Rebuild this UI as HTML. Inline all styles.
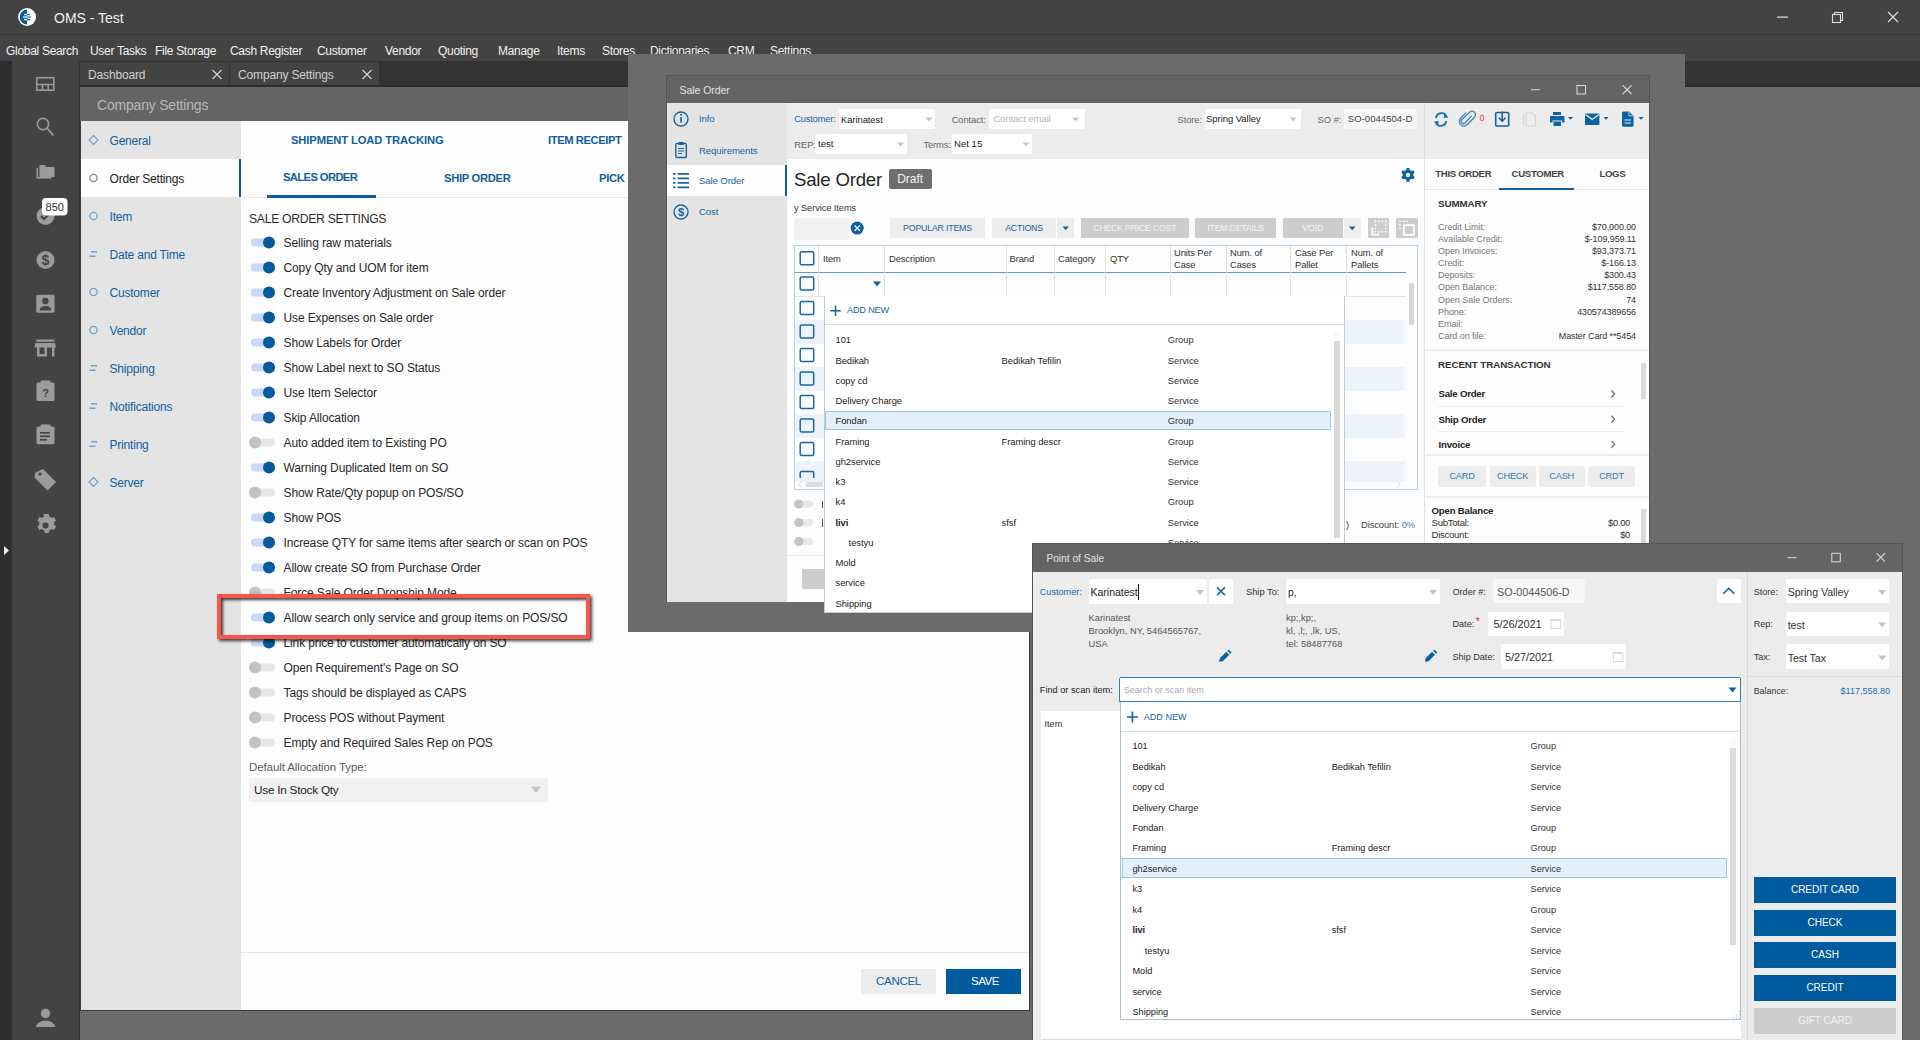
<!DOCTYPE html>
<html><head><meta charset="utf-8">
<style>
*{box-sizing:border-box;margin:0;padding:0}
html,body{width:1920px;height:1040px;overflow:hidden;background:#6b6b6b;font-family:"Liberation Sans",sans-serif;}
.a{position:absolute}
.t{position:absolute;white-space:nowrap;line-height:1}
.bl{color:#0b5f9e}
svg{position:absolute;overflow:visible}
</style></head><body>
<!-- title bar -->
<div class="a" style="left:0;top:0;width:1920px;height:34px;background:#434343"></div>
<div class="a" style="left:0;top:34px;width:1920px;height:1px;background:#353535"></div>
<div class="a" style="left:0;top:35px;width:1920px;height:26px;background:#434343"></div>
<!-- tab strip -->
<div class="a" style="left:80px;top:61px;width:1840px;height:26px;background:#333333"></div>
<!-- left strip + sidebar -->
<div class="a" style="left:0;top:61px;width:12px;height:979px;background:#2e2e2e"></div>
<div class="a" style="left:12px;top:61px;width:67px;height:979px;background:#434343"></div>
<div class="a" style="left:79px;top:61px;width:1px;height:979px;background:#333"></div>


<svg style="left:0;top:0" width="60" height="34">
<circle cx="27.1" cy="17" r="9" fill="#fff"/>
<path d="M27.1 9.6 A7.4 7.4 0 0 0 27.1 24.4 Z" fill="#075e9c"/>
<rect x="24" y="13.9" width="3.1" height="1.3" fill="#fff"/>
<rect x="27.1" y="13.9" width="3" height="1.3" fill="#075e9c"/>
<rect x="23" y="16.3" width="4.1" height="1.5" fill="#d7e4ee"/>
<rect x="27.1" y="16.3" width="4" height="1.5" fill="#4d88b3"/>
<rect x="24" y="18.9" width="3.1" height="1.3" fill="#fff"/>
<rect x="27.1" y="18.9" width="3" height="1.3" fill="#075e9c"/>
</svg>
<div class="t" style="left:54px;top:11.3px;font-size:14px;color:#f0f0f0">OMS - Test</div>
<svg style="left:1770px;top:5px" width="140" height="24">
<rect x="7" y="11.5" width="11" height="1.2" fill="#ddd"/>
<rect x="62.5" y="9.5" width="8" height="8" fill="none" stroke="#ddd" stroke-width="1.1"/>
<path d="M64.5 9.5 V7.5 H72.5 V15.5 H70.5" fill="none" stroke="#ddd" stroke-width="1.1"/>
<path d="M118 7 L128 17 M128 7 L118 17" stroke="#ddd" stroke-width="1.2"/>
</svg>

<div class="t" style="left:6px;top:45.2px;font-size:12px;letter-spacing:-0.3px;color:#f2f2f2">Global Search</div>
<div class="t" style="left:90px;top:45.2px;font-size:12px;letter-spacing:-0.3px;color:#f2f2f2">User Tasks</div>
<div class="t" style="left:155px;top:45.2px;font-size:12px;letter-spacing:-0.3px;color:#f2f2f2">File Storage</div>
<div class="t" style="left:230px;top:45.2px;font-size:12px;letter-spacing:-0.3px;color:#f2f2f2">Cash Register</div>
<div class="t" style="left:317px;top:45.2px;font-size:12px;letter-spacing:-0.3px;color:#f2f2f2">Customer</div>
<div class="t" style="left:385px;top:45.2px;font-size:12px;letter-spacing:-0.3px;color:#f2f2f2">Vendor</div>
<div class="t" style="left:438px;top:45.2px;font-size:12px;letter-spacing:-0.3px;color:#f2f2f2">Quoting</div>
<div class="t" style="left:498px;top:45.2px;font-size:12px;letter-spacing:-0.3px;color:#f2f2f2">Manage</div>
<div class="t" style="left:557px;top:45.2px;font-size:12px;letter-spacing:-0.3px;color:#f2f2f2">Items</div>
<div class="t" style="left:602px;top:45.2px;font-size:12px;letter-spacing:-0.3px;color:#f2f2f2">Stores</div>
<div class="t" style="left:650px;top:45.2px;font-size:12px;letter-spacing:-0.3px;color:#f2f2f2">Dictionaries</div>
<div class="t" style="left:728px;top:45.2px;font-size:12px;letter-spacing:-0.3px;color:#f2f2f2">CRM</div>
<div class="t" style="left:770px;top:45.2px;font-size:12px;letter-spacing:-0.3px;color:#f2f2f2">Settings</div>


<svg style="left:12px;top:61px" width="67" height="979">
<g fill="none" stroke="#9b9b9b" stroke-width="1.6">
<rect x="24.8" y="16.7" width="17" height="12.5"/>
<path d="M24.8 23.5 H41.8 M30.5 23.5 V29.2 M36.2 23.5 V29.2"/>
<circle cx="31" cy="63" r="5.6"/>
<path d="M35 67 L41.5 74.5" stroke-width="1.9"/>
</g>
<g fill="#9b9b9b">
<path d="M27.5 104 h5 l1.8 2 h8.2 v10 h-15 z"/>
<path d="M24.5 107 v10.5 h15 v-1.6 h-13.4 v-8.9 z"/>
<circle cx="33.5" cy="155" r="9"/>
<circle cx="33.5" cy="199" r="9"/>
<rect x="24.3" y="233.8" width="18.2" height="17.9" rx="1.5"/>
<path d="M24.3 278.5 h18 v2.2 h-18z M23.5 282 h19.5 l1 4.5 h-21.5z M25 286.5 h2.5 v9 h-2.5z M40 286.5 h2.5 v9 h-2.5z M25 293 h10 v2.5 h-10z M32.5 286.5 h2.5 v9 h-2.5z"/>
<rect x="24.5" y="321.5" width="18" height="18.5" rx="1.5"/>
<rect x="28.5" y="319.5" width="10" height="4" rx="1"/>
<rect x="24.5" y="365.5" width="18" height="17.8" rx="1.5"/>
<rect x="28.5" y="363.5" width="10" height="4" rx="1"/>
<path d="M23 412 l8 -4 l13 13 l-8.5 8.5 l-13 -13 z"/>
<path d="M33.5 453 m-2,0 l0.6,2.6 a7,7 0 0 0 -2.2,1.3 l-2.5,-0.9 l-2,3.4 l2,1.8 a7,7 0 0 0 0,2.6 l-2,1.8 l2,3.4 l2.5,-0.9 a7,7 0 0 0 2.2,1.3 l0.6,2.6 h4 l0.6,-2.6 a7,7 0 0 0 2.2,-1.3 l2.5,0.9 l2,-3.4 l-2,-1.8 a7,7 0 0 0 0,-2.6 l2,-1.8 l-2,-3.4 l-2.5,0.9 a7,7 0 0 0 -2.2,-1.3 l-0.6,-2.6 z"/>
<circle cx="33.5" cy="952.5" r="4.7"/>
<path d="M24 966 a9.5 6.5 0 0 1 19 0 z"/>
</g>
<g fill="none" stroke="#434343" stroke-width="2">
<path d="M29 155 l3 3 l5.5 -5.5"/>
</g>
<text x="33.5" y="204" font-family="Liberation Sans" font-size="14" font-weight="bold" fill="#434343" text-anchor="middle">$</text>
<g fill="#434343">
<circle cx="33.4" cy="240" r="3.2"/>
<path d="M27.5 249.5 a6 4.5 0 0 1 12 0 z"/>
<rect x="28" y="371" width="10" height="1.6"/><rect x="28" y="374.5" width="10" height="1.6"/><rect x="28" y="378" width="7" height="1.6"/>
<circle cx="28" cy="413" r="1.6"/>
<circle cx="33.5" cy="464.5" r="3"/>
</g>
<text x="33.5" y="336" font-family="Liberation Sans" font-size="11" font-weight="bold" fill="#434343" text-anchor="middle">?</text>
<rect x="30" y="137" width="25.5" height="17.5" rx="4" fill="#fff"/>
<text x="42.8" y="150" font-family="Liberation Sans" font-size="11" fill="#333" text-anchor="middle">850</text>
<path d="M-8 485 l5 4.5 l-5 4.5z" fill="#eee"/>
</svg>


<div class="a" style="left:80px;top:62px;width:149px;height:23px;background:#434343"></div>
<div class="a" style="left:230px;top:62px;width:149px;height:23px;background:#434343"></div>
<div class="a" style="left:80px;top:85px;width:1840px;height:2px;background:#2c2c2c"></div>
<div class="t" style="left:88px;top:68.7px;font-size:12px;color:#cfcfcf;font-weight:400;letter-spacing:-0.15px;">Dashboard</div>
<div class="t" style="left:238px;top:68.7px;font-size:12px;color:#cfcfcf;font-weight:400;letter-spacing:-0.15px;">Company Settings</div>
<svg style="left:0;top:0" width="400" height="100"><path d="M212.5 70 L221.5 79 M221.5 70 L212.5 79 M362.5 70 L371.5 79 M371.5 70 L362.5 79" stroke="#d0d0d0" stroke-width="1.2"/></svg>


<div class="a" style="left:80px;top:87px;width:950px;height:34px;background:#646464"></div>
<div class="a" style="left:80px;top:121px;width:950px;height:890px;background:#3d3d3d"></div>
<div class="a" style="left:81px;top:121px;width:160px;height:889px;background:#e4e4e4"></div>
<div class="a" style="left:241px;top:121px;width:788px;height:889px;background:#fdfdfd"></div>
<div class="a" style="left:81px;top:159px;width:160px;height:38px;background:#fdfdfd"></div>
<div class="a" style="left:239px;top:159px;width:2px;height:38px;background:#0e5e9e"></div>
<div class="t" style="left:97px;top:98.3px;font-size:14px;color:#b9b9b9;font-weight:400;letter-spacing:-0.2px;">Company Settings</div>
<div class="t" style="left:109.5px;top:135.2px;font-size:12px;color:#0e60a0;font-weight:400;letter-spacing:-0.2px;">General</div>
<div class="t" style="left:109.5px;top:173.2px;font-size:12px;color:#1a1a1a;font-weight:400;letter-spacing:-0.2px;">Order Settings</div>
<div class="t" style="left:109.5px;top:211.2px;font-size:12px;color:#0e60a0;font-weight:400;letter-spacing:-0.2px;">Item</div>
<div class="t" style="left:109.5px;top:249.2px;font-size:12px;color:#0e60a0;font-weight:400;letter-spacing:-0.2px;">Date and Time</div>
<div class="t" style="left:109.5px;top:287.2px;font-size:12px;color:#0e60a0;font-weight:400;letter-spacing:-0.2px;">Customer</div>
<div class="t" style="left:109.5px;top:325.2px;font-size:12px;color:#0e60a0;font-weight:400;letter-spacing:-0.2px;">Vendor</div>
<div class="t" style="left:109.5px;top:363.2px;font-size:12px;color:#0e60a0;font-weight:400;letter-spacing:-0.2px;">Shipping</div>
<div class="t" style="left:109.5px;top:401.2px;font-size:12px;color:#0e60a0;font-weight:400;letter-spacing:-0.2px;">Notifications</div>
<div class="t" style="left:109.5px;top:439.2px;font-size:12px;color:#0e60a0;font-weight:400;letter-spacing:-0.2px;">Printing</div>
<div class="t" style="left:109.5px;top:477.2px;font-size:12px;color:#0e60a0;font-weight:400;letter-spacing:-0.2px;">Server</div>
<svg style="left:0;top:0" width="260" height="500"><path d="M93.5 135.5 L98 140 L93.5 144.5 L89 140 Z" fill="none" stroke="#6aa3c8" stroke-width="1.2"/><circle cx="93.5" cy="178.0" r="3.6" fill="none" stroke="#8a8a8a" stroke-width="1.3"/><circle cx="93.5" cy="216.0" r="3.6" fill="none" stroke="#6aa3c8" stroke-width="1.3"/><path d="M91 251.8 H97 M89.5 256.3 H95.5" stroke="#6aa3c8" stroke-width="1.5"/><circle cx="93.5" cy="292.0" r="3.6" fill="none" stroke="#6aa3c8" stroke-width="1.3"/><circle cx="93.5" cy="330.0" r="3.6" fill="none" stroke="#6aa3c8" stroke-width="1.3"/><path d="M91 365.8 H97 M89.5 370.3 H95.5" stroke="#6aa3c8" stroke-width="1.5"/><path d="M91 403.8 H97 M89.5 408.3 H95.5" stroke="#6aa3c8" stroke-width="1.5"/><path d="M91 441.8 H97 M89.5 446.3 H95.5" stroke="#6aa3c8" stroke-width="1.5"/><path d="M93.5 477.5 L98 482 L93.5 486.5 L89 482 Z" fill="none" stroke="#6aa3c8" stroke-width="1.2"/></svg>
<div class="t" style="left:291px;top:135.1px;font-size:11.2px;color:#0e60a0;font-weight:700;letter-spacing:-0.1px;">SHIPMENT LOAD TRACKING</div>
<div class="t" style="left:548px;top:135.1px;font-size:11.2px;color:#0e60a0;font-weight:700;letter-spacing:-0.4px;">ITEM RECEIPT</div>
<div class="t" style="left:283px;top:172.1px;font-size:11.2px;color:#0e60a0;font-weight:700;letter-spacing:-0.6px;">SALES ORDER</div>
<div class="t" style="left:444px;top:173.1px;font-size:11.2px;color:#0e60a0;font-weight:700;letter-spacing:-0.3px;">SHIP ORDER</div>
<div class="t" style="left:599px;top:173.1px;font-size:11.2px;color:#0e60a0;font-weight:700;letter-spacing:-0.3px;">PICK</div>
<div class="a" style="left:241px;top:197px;width:788px;height:1px;background:#e9e9e9"></div>
<div class="a" style="left:267px;top:194.5px;width:109px;height:3px;background:#0e5e9e"></div>
<div class="t" style="left:249px;top:212.9px;font-size:12.2px;color:#2e2e2e;font-weight:400;letter-spacing:-0.3px;">SALE ORDER SETTINGS</div>
<div class="t" style="left:283.5px;top:236.7px;font-size:12px;color:#292929;font-weight:400;letter-spacing:-0.12px;">Selling raw materials</div>
<div class="t" style="left:283.5px;top:261.7px;font-size:12px;color:#292929;font-weight:400;letter-spacing:-0.12px;">Copy Qty and UOM for item</div>
<div class="t" style="left:283.5px;top:286.7px;font-size:12px;color:#292929;font-weight:400;letter-spacing:-0.12px;">Create Inventory Adjustment on Sale order</div>
<div class="t" style="left:283.5px;top:311.7px;font-size:12px;color:#292929;font-weight:400;letter-spacing:-0.12px;">Use Expenses on Sale order</div>
<div class="t" style="left:283.5px;top:336.7px;font-size:12px;color:#292929;font-weight:400;letter-spacing:-0.12px;">Show Labels for Order</div>
<div class="t" style="left:283.5px;top:361.7px;font-size:12px;color:#292929;font-weight:400;letter-spacing:-0.12px;">Show Label next to SO Status</div>
<div class="t" style="left:283.5px;top:386.7px;font-size:12px;color:#292929;font-weight:400;letter-spacing:-0.12px;">Use Item Selector</div>
<div class="t" style="left:283.5px;top:411.7px;font-size:12px;color:#292929;font-weight:400;letter-spacing:-0.12px;">Skip Allocation</div>
<div class="t" style="left:283.5px;top:436.7px;font-size:12px;color:#292929;font-weight:400;letter-spacing:-0.12px;">Auto added item to Existing PO</div>
<div class="t" style="left:283.5px;top:461.7px;font-size:12px;color:#292929;font-weight:400;letter-spacing:-0.12px;">Warning Duplicated Item on SO</div>
<div class="t" style="left:283.5px;top:486.7px;font-size:12px;color:#292929;font-weight:400;letter-spacing:-0.12px;">Show Rate/Qty popup on POS/SO</div>
<div class="t" style="left:283.5px;top:511.7px;font-size:12px;color:#292929;font-weight:400;letter-spacing:-0.12px;">Show POS</div>
<div class="t" style="left:283.5px;top:536.7px;font-size:12px;color:#292929;font-weight:400;letter-spacing:-0.12px;">Increase QTY for same items after search or scan on POS</div>
<div class="t" style="left:283.5px;top:561.7px;font-size:12px;color:#292929;font-weight:400;letter-spacing:-0.12px;">Allow create SO from Purchase Order</div>
<div class="t" style="left:283.5px;top:586.7px;font-size:12px;color:#292929;font-weight:400;letter-spacing:-0.12px;">Force Sale Order Dropship Mode</div>
<div class="t" style="left:283.5px;top:611.7px;font-size:12px;color:#292929;font-weight:400;letter-spacing:-0.12px;">Allow search only service and group items on POS/SO</div>
<div class="t" style="left:283.5px;top:636.7px;font-size:12px;color:#292929;font-weight:400;letter-spacing:-0.12px;">Link price to customer automatically on SO</div>
<div class="t" style="left:283.5px;top:661.7px;font-size:12px;color:#292929;font-weight:400;letter-spacing:-0.12px;">Open Requirement's Page on SO</div>
<div class="t" style="left:283.5px;top:686.7px;font-size:12px;color:#292929;font-weight:400;letter-spacing:-0.12px;">Tags should be displayed as CAPS</div>
<div class="t" style="left:283.5px;top:711.7px;font-size:12px;color:#292929;font-weight:400;letter-spacing:-0.12px;">Process POS without Payment</div>
<div class="t" style="left:283.5px;top:736.7px;font-size:12px;color:#292929;font-weight:400;letter-spacing:-0.12px;">Empty and Required Sales Rep on POS</div>
<svg style="left:0;top:0" width="600" height="800"><rect x="251" y="238.5" width="24" height="8" rx="4" fill="#c9d8fa"/><circle cx="269" cy="242.5" r="6" fill="#035c9c"/><rect x="251" y="263.5" width="24" height="8" rx="4" fill="#c9d8fa"/><circle cx="269" cy="267.5" r="6" fill="#035c9c"/><rect x="251" y="288.5" width="24" height="8" rx="4" fill="#c9d8fa"/><circle cx="269" cy="292.5" r="6" fill="#035c9c"/><rect x="251" y="313.5" width="24" height="8" rx="4" fill="#c9d8fa"/><circle cx="269" cy="317.5" r="6" fill="#035c9c"/><rect x="251" y="338.5" width="24" height="8" rx="4" fill="#c9d8fa"/><circle cx="269" cy="342.5" r="6" fill="#035c9c"/><rect x="251" y="363.5" width="24" height="8" rx="4" fill="#c9d8fa"/><circle cx="269" cy="367.5" r="6" fill="#035c9c"/><rect x="251" y="388.5" width="24" height="8" rx="4" fill="#c9d8fa"/><circle cx="269" cy="392.5" r="6" fill="#035c9c"/><rect x="251" y="413.5" width="24" height="8" rx="4" fill="#c9d8fa"/><circle cx="269" cy="417.5" r="6" fill="#035c9c"/><rect x="251" y="438.5" width="24" height="8" rx="4" fill="#e6e6e6"/><circle cx="255" cy="442.5" r="6" fill="#c2c2c2"/><rect x="251" y="463.5" width="24" height="8" rx="4" fill="#c9d8fa"/><circle cx="269" cy="467.5" r="6" fill="#035c9c"/><rect x="251" y="488.5" width="24" height="8" rx="4" fill="#e6e6e6"/><circle cx="255" cy="492.5" r="6" fill="#c2c2c2"/><rect x="251" y="513.5" width="24" height="8" rx="4" fill="#c9d8fa"/><circle cx="269" cy="517.5" r="6" fill="#035c9c"/><rect x="251" y="538.5" width="24" height="8" rx="4" fill="#c9d8fa"/><circle cx="269" cy="542.5" r="6" fill="#035c9c"/><rect x="251" y="563.5" width="24" height="8" rx="4" fill="#c9d8fa"/><circle cx="269" cy="567.5" r="6" fill="#035c9c"/><rect x="251" y="588.5" width="24" height="8" rx="4" fill="#e6e6e6"/><circle cx="255" cy="592.5" r="6" fill="#c2c2c2"/><rect x="251" y="613.5" width="24" height="8" rx="4" fill="#c9d8fa"/><circle cx="269" cy="617.5" r="6" fill="#035c9c"/><rect x="251" y="638.5" width="24" height="8" rx="4" fill="#c9d8fa"/><circle cx="269" cy="642.5" r="6" fill="#035c9c"/><rect x="251" y="663.5" width="24" height="8" rx="4" fill="#e6e6e6"/><circle cx="255" cy="667.5" r="6" fill="#c2c2c2"/><rect x="251" y="688.5" width="24" height="8" rx="4" fill="#e6e6e6"/><circle cx="255" cy="692.5" r="6" fill="#c2c2c2"/><rect x="251" y="713.5" width="24" height="8" rx="4" fill="#e6e6e6"/><circle cx="255" cy="717.5" r="6" fill="#c2c2c2"/><rect x="251" y="738.5" width="24" height="8" rx="4" fill="#e6e6e6"/><circle cx="255" cy="742.5" r="6" fill="#c2c2c2"/></svg>
<div class="t" style="left:249px;top:761.5px;font-size:11.5px;color:#5a5a5a;font-weight:400;letter-spacing:-0.1px;">Default Allocation Type:</div>
<div class="a" style="left:249px;top:778px;width:299px;height:24px;background:#f1f1f1;border-radius:2px"></div>
<div class="t" style="left:254px;top:784.8px;font-size:11.8px;color:#222;font-weight:400;letter-spacing:-0.25px;">Use In Stock Qty</div>
<svg style="left:0;top:0" width="600" height="800"><path d="M531 786.5 H541 L536 793 Z" fill="#c4c4c4"/></svg>
<div class="a" style="left:241px;top:952px;width:788px;height:1px;background:#e6e6e6"></div>
<div class="a" style="left:861px;top:969px;width:75px;height:25px;background:#ececec"></div>
<div class="a" style="left:946px;top:969px;width:75px;height:25px;background:#005a9e"></div>
<div class="t" style="left:876px;top:976.0px;font-size:11.5px;color:#0e60a0;font-weight:400;letter-spacing:-0.3px;">CANCEL</div>
<div class="t" style="left:971px;top:976.0px;font-size:11.5px;color:#fff;font-weight:400;letter-spacing:-0.5px;">SAVE</div>
<div class="a" style="left:217px;top:594px;width:373px;height:45px;border:4px solid #f5584a;box-shadow:2px 2px 3px rgba(0,0,0,0.75), inset 2px 2px 3px rgba(0,0,0,0.75)"></div>

<div class="a" style="left:628px;top:54px;width:1057px;height:578px;background:#6b6b6b;"></div>

<div class="a" style="left:666px;top:75px;width:984px;height:527px;background:#555555;"></div>
<div class="a" style="left:667px;top:76px;width:982px;height:27px;background:#646464;"></div>
<div class="t" style="left:679.5px;top:84.9px;font-size:10.6px;color:#e2e2e2;font-weight:400;letter-spacing:-0.1px;">Sale Order</div>
<svg style="left:0;top:0" width="1700" height="700">
<rect x="1531" y="89.2" width="9" height="1" fill="#dcdcdc"/>
<rect x="1577" y="85.5" width="8.5" height="8.5" fill="none" stroke="#dcdcdc" stroke-width="1"/>
<path d="M1622.8 85.3 L1631.5 94 M1631.5 85.3 L1622.8 94" stroke="#dcdcdc" stroke-width="1.1"/>
</svg>
<div class="a" style="left:667px;top:103px;width:982px;height:499px;background:#fdfdfd;"></div>
<div class="a" style="left:667px;top:103px;width:120px;height:499px;background:#e4e4e4;"></div>
<div class="a" style="left:667px;top:165px;width:120px;height:31px;background:#fdfdfd;"></div>
<div class="a" style="left:785px;top:165px;width:2px;height:31px;background:#0e5e9e;"></div>
<div class="a" style="left:787px;top:103px;width:637px;height:56px;background:#ececec;"></div>
<div class="a" style="left:1424px;top:103px;width:1px;height:499px;background:#dedede;"></div>
<div class="a" style="left:1425px;top:103px;width:224px;height:56px;background:#ececec;"></div>
<div class="t" style="left:699px;top:114.4px;font-size:9.6px;color:#1665a3;font-weight:400;letter-spacing:-0.1px;">Info</div>
<div class="t" style="left:699px;top:145.9px;font-size:9.6px;color:#1665a3;font-weight:400;letter-spacing:-0.1px;">Requirements</div>
<div class="t" style="left:699px;top:176.4px;font-size:9.6px;color:#1665a3;font-weight:400;letter-spacing:-0.1px;">Sale Order</div>
<div class="t" style="left:699px;top:207.4px;font-size:9.6px;color:#1665a3;font-weight:400;letter-spacing:-0.1px;">Cost</div>
<svg style="left:0;top:0" width="1700" height="700">
<circle cx="681" cy="119" r="7" fill="none" stroke="#1665a3" stroke-width="1.4"/>
<rect x="680.2" y="117" width="1.7" height="5.5" fill="#1665a3"/><circle cx="681" cy="114.8" r="1" fill="#1665a3"/>
<rect x="675.8" y="143.5" width="10.5" height="14" rx="1.2" fill="none" stroke="#1665a3" stroke-width="1.4"/>
<rect x="678.5" y="142" width="5" height="3" fill="#1665a3"/>
<path d="M678 148.5 H684 M678 151 H684 M678 153.5 H682" stroke="#1665a3" stroke-width="1"/>
<path d="M673 173.9 h2.4 M673 178.4 h2.4 M673 182.9 h2.4 M673 187.4 h2.4 M677.6 173.9 h11.4 M677.6 178.4 h11.4 M677.6 182.9 h11.4 M677.6 187.4 h11.4" stroke="#1665a3" stroke-width="1.9"/>
<circle cx="681" cy="212" r="7" fill="none" stroke="#1665a3" stroke-width="1.4"/>
<text x="681" y="216" font-family="Liberation Sans" font-size="11" font-weight="bold" fill="#1665a3" text-anchor="middle">$</text>
</svg>
<div class="t" style="left:794.3px;top:114.6px;font-size:9.2px;color:#1665a3;font-weight:400;letter-spacing:-0.1px;">Customer:</div>
<div class="a" style="left:839px;top:109px;width:96px;height:19.5px;background:#ffffff;border-radius:2px"></div>
<div class="t" style="left:841px;top:114.5px;font-size:9.4px;color:#222;font-weight:400;letter-spacing:-0.05px;">Karinatest</div>
<svg style="left:0;top:0" width="1" height="1"><path d="M925.5 117.4 H932.5 L929 121.6 Z" fill="#c4c4c4"/></svg><div class="t" style="left:951.7px;top:114.5px;font-size:9.4px;color:#666;font-weight:400;letter-spacing:-0.1px;">Contact:</div>
<div class="a" style="left:989.4px;top:109px;width:96px;height:19.5px;background:#ffffff;border-radius:2px"></div>
<div class="t" style="left:993.4px;top:114.4px;font-size:9.6px;color:#b3b3b3;font-weight:400;letter-spacing:-0.1px;">Contact email</div>
<svg style="left:0;top:0" width="1" height="1"><path d="M1072.0 117.4 H1079.0 L1075.5 121.6 Z" fill="#c4c4c4"/></svg><div class="t" style="left:1177.5px;top:114.5px;font-size:9.4px;color:#666;font-weight:400;letter-spacing:-0.1px;">Store:</div>
<div class="a" style="left:1205px;top:109px;width:96px;height:19.5px;background:#ffffff;border-radius:2px"></div>
<div class="t" style="left:1206px;top:114.4px;font-size:9.5px;color:#222;font-weight:400;letter-spacing:-0.05px;">Spring Valley</div>
<svg style="left:0;top:0" width="1" height="1"><path d="M1289.5 117.4 H1296.5 L1293 121.6 Z" fill="#c4c4c4"/></svg><div class="t" style="left:1317.5px;top:114.5px;font-size:9.4px;color:#666;font-weight:400;letter-spacing:0px;">SO #:</div>
<div class="a" style="left:1344px;top:109px;width:73px;height:19.5px;background:#f6f6f6;border-radius:2px"></div>
<div class="t" style="left:1347.8px;top:114.4px;font-size:9.6px;color:#444;font-weight:400;letter-spacing:0px;">SO-0044504-D</div>
<div class="t" style="left:794.3px;top:139.5px;font-size:9.4px;color:#666;font-weight:400;letter-spacing:0px;">REP:</div>
<div class="a" style="left:815px;top:133.6px;width:92px;height:20px;background:#ffffff;border-radius:2px"></div>
<div class="t" style="left:818px;top:139.4px;font-size:9.6px;color:#222;font-weight:400;letter-spacing:0px;">test</div>
<svg style="left:0;top:0" width="1" height="1"><path d="M897.0 142.4 H904.0 L900.5 146.6 Z" fill="#c4c4c4"/></svg><div class="t" style="left:923.4px;top:139.5px;font-size:9.4px;color:#666;font-weight:400;letter-spacing:-0.1px;">Terms:</div>
<div class="a" style="left:952.4px;top:133.6px;width:80px;height:20px;background:#ffffff;border-radius:2px"></div>
<div class="t" style="left:954px;top:139.4px;font-size:9.6px;color:#222;font-weight:400;letter-spacing:0px;">Net 15</div>
<svg style="left:0;top:0" width="1" height="1"><path d="M1022.5 142.4 H1029.5 L1026 146.6 Z" fill="#c4c4c4"/></svg><svg style="left:0;top:0" width="1700" height="700">
<g fill="none" stroke="#1d73ae" stroke-width="1.9">
<path d="M1436 118 a5.6 5.6 0 0 1 10.3 -2.2"/><path d="M1446.3 121 a5.6 5.6 0 0 1 -10.3 2.2"/>
</g>
<path d="M1444.5 113 L1448.5 117.5 L1443.5 118 Z M1437.7 126 L1433.8 121.5 L1438.8 121 Z" fill="#1d73ae"/>
<path d="M1471.5 116 L1465 123 a2.3 2.3 0 0 1 -3.3 -3.2 L1469.5 112.3 a3.5 3.5 0 0 1 5 5 L1467 124.8 a4.6 4.6 0 0 1 -6.5 -6.5 L1466 112.6" fill="none" stroke="#3b86bd" stroke-width="1.3"/>
<text x="1482" y="121.3" font-family="Liberation Sans" font-size="9" fill="#ee3333" text-anchor="middle">0</text>
<rect x="1495.7" y="112.5" width="13" height="13.5" rx="1" fill="none" stroke="#0c62a2" stroke-width="1.6"/>
<path d="M1502.2 111.5 V121 M1498.8 117.8 L1502.2 121.2 L1505.6 117.8" fill="none" stroke="#0c62a2" stroke-width="1.6"/>
<path d="M1526 113 h6.5 l3 3 v10 h-9.5z M1523.5 115 v10" fill="none" stroke="#d4d4d4" stroke-width="1.1"/>
<path d="M1553 112 h8 v3 h-8z M1550 116 h14.5 v6.5 h-2.5 v-2 h-9.5 v2 h-2.5z M1553.5 121.5 h7.5 v4.5 h-7.5z" fill="#0c62a2"/>
<path d="M1568 117 h5 l-2.5 2.8z M1603.5 117 h5 l-2.5 2.8z M1638.5 117 h5 l-2.5 2.8z" fill="#0c62a2"/>
<rect x="1585" y="113.6" width="14.4" height="11.4" rx="1" fill="#0c62a2"/>
<path d="M1585.5 114.5 L1592.2 119.5 L1599 114.5" fill="none" stroke="#ececec" stroke-width="1.2"/>
<path d="M1622 113 a1.5 1.5 0 0 1 1.5 -1.5 h5.5 l4.6 4.6 v9.2 a1.5 1.5 0 0 1 -1.5 1.5 h-8.6 a1.5 1.5 0 0 1 -1.5 -1.5z" fill="#0c62a2"/>
<path d="M1624.5 120 h6.5 M1624.5 123 h6.5" stroke="#ececec" stroke-width="1.1"/>
<path d="M1629 112 v3.8 h4" fill="none" stroke="#ececec" stroke-width="0.8"/>
</svg>
<div class="t" style="left:794px;top:170.5px;font-size:18.6px;color:#262626;font-weight:400;letter-spacing:-0.2px;">Sale Order</div>
<div class="a" style="left:889px;top:168.5px;width:42.5px;height:20.5px;background:#6f6f6f;border-radius:2px"></div>
<div class="t" style="left:710.2px;width:400px;text-align:center;top:173.0px;font-size:12px;color:#f2f2f2;font-weight:400;letter-spacing:0px;">Draft</div>
<svg style="left:0;top:0" width="1700" height="700">
<g transform="translate(1408 175)">
<path d="M-1.4 -7 h2.8 l0.4 2 a5 5 0 0 1 1.6 0.9 l1.9 -0.7 l1.4 2.4 l-1.5 1.3 a5 5 0 0 1 0 1.9 l1.5 1.3 l-1.4 2.4 l-1.9 -0.7 a5 5 0 0 1 -1.6 0.9 l-0.4 2 h-2.8 l-0.4 -2 a5 5 0 0 1 -1.6 -0.9 l-1.9 0.7 l-1.4 -2.4 l1.5 -1.3 a5 5 0 0 1 0 -1.9 l-1.5 -1.3 l1.4 -2.4 l1.9 0.7 a5 5 0 0 1 1.6 -0.9z" fill="#0c62a2"/>
<circle r="2.2" fill="#fff"/>
</g>
</svg>
<div class="t" style="left:794px;top:203.6px;font-size:9.2px;color:#333;font-weight:400;letter-spacing:-0.05px;">y Service Items</div>
<div class="a" style="left:794px;top:218px;width:54.5px;height:21.5px;background:#f1f1f1;border-radius:2px"></div>
<svg style="left:0;top:0" width="1700" height="700">
<circle cx="857.2" cy="228.1" r="6.5" fill="#0c62a2"/>
<path d="M854.6 225.5 L859.8 230.7 M859.8 225.5 L854.6 230.7" stroke="#fff" stroke-width="1.3"/>
</svg>
<div class="a" style="left:890px;top:218px;width:95px;height:19.6px;background:#ececec;"></div>
<div class="t" style="left:737.5px;width:400px;text-align:center;top:224.1px;font-size:8.8px;color:#1665a3;font-weight:400;letter-spacing:-0.2px;">POPULAR ITEMS</div>
<div class="a" style="left:992px;top:218px;width:64px;height:19.6px;background:#ececec;"></div>
<div class="t" style="left:824px;width:400px;text-align:center;top:224.1px;font-size:8.8px;color:#1665a3;font-weight:400;letter-spacing:-0.2px;">ACTIONS</div>
<div class="a" style="left:1057.3px;top:218px;width:17px;height:19.6px;background:#ececec;"></div>
<svg style="left:0;top:0" width="1" height="1"><path d="M1062.5 226.48000000000002 H1068.9 L1065.7 230.32 Z" fill="#0c62a2"/></svg><div class="a" style="left:1081px;top:218px;width:107.6px;height:19.6px;background:#cdcdcd;"></div>
<div class="t" style="left:934.8px;width:400px;text-align:center;top:224.1px;font-size:8.8px;color:#f4f4f4;font-weight:400;letter-spacing:-0.25px;">CHECK PRICE COST</div>
<div class="a" style="left:1195px;top:218px;width:81.3px;height:19.6px;background:#cdcdcd;"></div>
<div class="t" style="left:1035.6px;width:400px;text-align:center;top:224.1px;font-size:8.8px;color:#f4f4f4;font-weight:400;letter-spacing:-0.25px;">ITEM DETAILS</div>
<div class="a" style="left:1283px;top:218px;width:59.5px;height:19.6px;background:#cdcdcd;"></div>
<div class="t" style="left:1112.7px;width:400px;text-align:center;top:224.1px;font-size:8.8px;color:#f4f4f4;font-weight:400;letter-spacing:-0.2px;">VOID</div>
<div class="a" style="left:1343.5px;top:218px;width:17.5px;height:19.6px;background:#eeeeee;"></div>
<svg style="left:0;top:0" width="1" height="1"><path d="M1349.0 226.48000000000002 H1355.4 L1352.2 230.32 Z" fill="#0c62a2"/></svg><div class="a" style="left:1368px;top:218px;width:21.2px;height:19.6px;background:#cdcdcd;"></div>
<div class="a" style="left:1396.2px;top:218px;width:21.5px;height:19.6px;background:#cdcdcd;"></div>
<svg style="left:0;top:0" width="1" height="1"><rect x="1374.5" y="220.6" width="1.6" height="1.6" fill="#fff"/><rect x="1378.0" y="220.6" width="1.6" height="1.6" fill="#fff"/><rect x="1381.5" y="220.6" width="1.6" height="1.6" fill="#fff"/><rect x="1385.0" y="220.6" width="1.6" height="1.6" fill="#fff"/><rect x="1374.5" y="224.1" width="1.6" height="1.6" fill="#fff"/><rect x="1385.0" y="224.1" width="1.6" height="1.6" fill="#fff"/><rect x="1374.5" y="227.6" width="1.6" height="1.6" fill="#fff"/><rect x="1385.0" y="227.6" width="1.6" height="1.6" fill="#fff"/><rect x="1374.5" y="231.0" width="1.6" height="1.6" fill="#fff"/><rect x="1378.0" y="231.0" width="1.6" height="1.6" fill="#fff"/><rect x="1381.5" y="231.0" width="1.6" height="1.6" fill="#fff"/><rect x="1385.0" y="231.0" width="1.6" height="1.6" fill="#fff"/><rect x="1399.2" y="220.6" width="1.6" height="1.6" fill="#fff"/><rect x="1402.8" y="220.6" width="1.6" height="1.6" fill="#fff"/><rect x="1406.3" y="220.6" width="1.6" height="1.6" fill="#fff"/><rect x="1399.2" y="224.1" width="1.6" height="1.6" fill="#fff"/><rect x="1399.2" y="227.5" width="1.6" height="1.6" fill="#fff"/><path d="M1372.3 227.5 V234.6 H1379.5" fill="none" stroke="#fff" stroke-width="1.6"/><rect x="1403.8" y="225.1" width="10.2" height="9.8" fill="none" stroke="#fff" stroke-width="1.8"/></svg>
<div class="a" style="left:794px;top:245px;width:623.6px;height:245px;background:#fdfdfd;border:1px solid #b7cfe3"></div>
<div class="a" style="left:795px;top:320.0px;width:610px;height:23.5px;background:#edf3f9;"></div>
<div class="a" style="left:795px;top:367.0px;width:610px;height:23.5px;background:#edf3f9;"></div>
<div class="a" style="left:795px;top:414.0px;width:610px;height:23.5px;background:#edf3f9;"></div>
<div class="a" style="left:795px;top:461.0px;width:610px;height:23.5px;background:#edf3f9;"></div>
<div class="a" style="left:795px;top:271.5px;width:611px;height:1.5px;background:#5b9fd3;"></div>
<div class="a" style="left:795px;top:295.5px;width:611px;height:1px;background:#e2e2e2;"></div>
<div class="a" style="left:818.2px;top:246px;width:1px;height:49.5px;background:#e0e0e0;"></div>
<div class="a" style="left:884.2px;top:246px;width:1px;height:49.5px;background:#e0e0e0;"></div>
<div class="a" style="left:1005.5px;top:246px;width:1px;height:49.5px;background:#e0e0e0;"></div>
<div class="a" style="left:1053.7px;top:246px;width:1px;height:49.5px;background:#e0e0e0;"></div>
<div class="a" style="left:1105px;top:246px;width:1px;height:49.5px;background:#e0e0e0;"></div>
<div class="a" style="left:1170px;top:246px;width:1px;height:49.5px;background:#e0e0e0;"></div>
<div class="a" style="left:1225.7px;top:246px;width:1px;height:49.5px;background:#e0e0e0;"></div>
<div class="a" style="left:1290px;top:246px;width:1px;height:49.5px;background:#e0e0e0;"></div>
<div class="a" style="left:1346.3px;top:246px;width:1px;height:49.5px;background:#e0e0e0;"></div>
<svg style="left:0;top:0" width="1700" height="700">
<g fill="none" stroke="#1768a5" stroke-width="1.5">
<rect x="800.2" y="251.8" width="13.5" height="13" rx="1.5"/>
<rect x="800.2" y="277" width="13.5" height="13" rx="1.5"/>
<rect x="800.2" y="301.5" width="13.5" height="13" rx="1.5"/><rect x="800.2" y="325.0" width="13.5" height="13" rx="1.5"/><rect x="800.2" y="348.5" width="13.5" height="13" rx="1.5"/><rect x="800.2" y="372.0" width="13.5" height="13" rx="1.5"/><rect x="800.2" y="395.5" width="13.5" height="13" rx="1.5"/><rect x="800.2" y="419.0" width="13.5" height="13" rx="1.5"/><rect x="800.2" y="442.5" width="13.5" height="13" rx="1.5"/>
<path d="M800.2 478 V473 a1.5 1.5 0 0 1 1.5 -1.5 h10.5 a1.5 1.5 0 0 1 1.5 1.5 V478"/>
</g>
<path d="M873 281.5 h8 l-4 5z" fill="#0c62a2"/>
</svg>
<div class="a" style="left:795px;top:482px;width:622px;height:7px;background:#fdfdfd;"></div>
<div class="a" style="left:806px;top:482px;width:17px;height:5px;background:#dcdcdc;"></div>
<svg style="left:0;top:0" width="1" height="1"><path d="M801.5 481.5 L799 484.5 L801.5 487.5" fill="none" stroke="#d0d0d0" stroke-width="0.9"/><path d="M1397.5 481.5 L1400 484.5 L1397.5 487.5" fill="none" stroke="#d0d0d0" stroke-width="0.9"/></svg><div class="a" style="left:821.5px;top:500.5px;width:1.3px;height:7.5px;background:#555;"></div>
<div class="a" style="left:821.5px;top:519px;width:1.3px;height:7.5px;background:#555;"></div>
<div class="a" style="left:1408.6px;top:283px;width:5px;height:42px;background:#d6d6d6;"></div>
<div class="t" style="left:823px;top:254.0px;font-size:9.4px;color:#333;font-weight:400;letter-spacing:-0.1px;">Item</div>
<div class="t" style="left:889px;top:254.0px;font-size:9.4px;color:#333;font-weight:400;letter-spacing:-0.1px;">Description</div>
<div class="t" style="left:1009.5px;top:254.0px;font-size:9.4px;color:#333;font-weight:400;letter-spacing:-0.1px;">Brand</div>
<div class="t" style="left:1058px;top:254.0px;font-size:9.4px;color:#333;font-weight:400;letter-spacing:-0.1px;">Category</div>
<div class="t" style="left:1110px;top:254.0px;font-size:9.4px;color:#333;font-weight:400;letter-spacing:-0.1px;">QTY</div>
<div class="t" style="left:1174px;top:248.1px;font-size:9.4px;color:#333;font-weight:400;letter-spacing:-0.1px;">Units Per</div>
<div class="t" style="left:1174px;top:260.3px;font-size:9.4px;color:#333;font-weight:400;letter-spacing:-0.1px;">Case</div>
<div class="t" style="left:1230px;top:248.1px;font-size:9.4px;color:#333;font-weight:400;letter-spacing:-0.1px;">Num. of</div>
<div class="t" style="left:1230px;top:260.3px;font-size:9.4px;color:#333;font-weight:400;letter-spacing:-0.1px;">Cases</div>
<div class="t" style="left:1295px;top:248.1px;font-size:9.4px;color:#333;font-weight:400;letter-spacing:-0.1px;">Case Per</div>
<div class="t" style="left:1295px;top:260.3px;font-size:9.4px;color:#333;font-weight:400;letter-spacing:-0.1px;">Pallet</div>
<div class="t" style="left:1351px;top:248.1px;font-size:9.4px;color:#333;font-weight:400;letter-spacing:-0.1px;">Num. of</div>
<div class="t" style="left:1351px;top:260.3px;font-size:9.4px;color:#333;font-weight:400;letter-spacing:-0.1px;">Pallets</div>
<svg style="left:0;top:0" width="1700" height="700"><rect x="794" y="500.5" width="19" height="7" rx="3.5" fill="#e8e8e8"/><circle cx="798.8" cy="504" r="4.6" fill="#c4c4c4"/><rect x="794" y="519.0" width="19" height="7" rx="3.5" fill="#e8e8e8"/><circle cx="798.8" cy="522.5" r="4.6" fill="#c4c4c4"/><rect x="794" y="537.9" width="19" height="7" rx="3.5" fill="#e8e8e8"/><circle cx="798.8" cy="541.4" r="4.6" fill="#c4c4c4"/></svg>
<div class="t" style="left:1346px;top:519.9px;font-size:9.4px;color:#333;font-weight:400;letter-spacing:0px;">)</div>
<div class="t" style="left:1361px;top:519.9px;font-size:9.4px;color:#444;font-weight:400;letter-spacing:-0.1px;">Discount: <span style="color:#2a86c8">0%</span></div>
<div class="a" style="left:787px;top:555px;width:637px;height:1px;background:#e6e6e6;"></div>
<div class="a" style="left:802px;top:569px;width:60px;height:20px;background:#cdcdcd;"></div>
<div class="a" style="left:823.5px;top:296px;width:521.5px;height:316.5px;background:#ffffff;border:1px solid #b9cddd;border-top:none"></div>
<div class="a" style="left:824.5px;top:323.5px;width:520px;height:1px;background:#d9e3ea;"></div>
<svg style="left:0;top:0" width="1700" height="700"><path d="M835.5 305.5 v10.5 M830.3 310.8 h10.5" stroke="#0c62a2" stroke-width="1.5"/></svg>
<div class="t" style="left:847px;top:306.4px;font-size:9.2px;color:#1665a3;font-weight:400;letter-spacing:-0.2px;">ADD NEW</div>
<div class="a" style="left:825px;top:410.7px;width:506px;height:19.8px;background:#e3f0fa;border:1px solid #94c7ee"></div>
<div class="t" style="left:835.5px;top:335.3px;font-size:9.4px;color:#222;font-weight:400;letter-spacing:-0.05px;">101</div>
<div class="t" style="left:1167.8px;top:335.3px;font-size:9.4px;color:#333;font-weight:400;letter-spacing:-0.05px;">Group</div>
<div class="t" style="left:835.5px;top:355.5px;font-size:9.4px;color:#222;font-weight:400;letter-spacing:-0.05px;">Bedikah</div>
<div class="t" style="left:1001.6px;top:355.5px;font-size:9.4px;color:#222;font-weight:400;letter-spacing:-0.05px;">Bedikah Tefilin</div>
<div class="t" style="left:1167.8px;top:355.5px;font-size:9.4px;color:#333;font-weight:400;letter-spacing:-0.05px;">Service</div>
<div class="t" style="left:835.5px;top:375.8px;font-size:9.4px;color:#222;font-weight:400;letter-spacing:-0.05px;">copy cd</div>
<div class="t" style="left:1167.8px;top:375.8px;font-size:9.4px;color:#333;font-weight:400;letter-spacing:-0.05px;">Service</div>
<div class="t" style="left:835.5px;top:396.0px;font-size:9.4px;color:#222;font-weight:400;letter-spacing:-0.05px;">Delivery Charge</div>
<div class="t" style="left:1167.8px;top:396.0px;font-size:9.4px;color:#333;font-weight:400;letter-spacing:-0.05px;">Service</div>
<div class="t" style="left:835.5px;top:416.3px;font-size:9.4px;color:#222;font-weight:400;letter-spacing:-0.05px;">Fondan</div>
<div class="t" style="left:1167.8px;top:416.3px;font-size:9.4px;color:#333;font-weight:400;letter-spacing:-0.05px;">Group</div>
<div class="t" style="left:835.5px;top:436.5px;font-size:9.4px;color:#222;font-weight:400;letter-spacing:-0.05px;">Framing</div>
<div class="t" style="left:1001.6px;top:436.5px;font-size:9.4px;color:#222;font-weight:400;letter-spacing:-0.05px;">Framing descr</div>
<div class="t" style="left:1167.8px;top:436.5px;font-size:9.4px;color:#333;font-weight:400;letter-spacing:-0.05px;">Group</div>
<div class="t" style="left:835.5px;top:456.8px;font-size:9.4px;color:#222;font-weight:400;letter-spacing:-0.05px;">gh2service</div>
<div class="t" style="left:1167.8px;top:456.8px;font-size:9.4px;color:#333;font-weight:400;letter-spacing:-0.05px;">Service</div>
<div class="t" style="left:835.5px;top:477.0px;font-size:9.4px;color:#222;font-weight:400;letter-spacing:-0.05px;">k3</div>
<div class="t" style="left:1167.8px;top:477.0px;font-size:9.4px;color:#333;font-weight:400;letter-spacing:-0.05px;">Service</div>
<div class="t" style="left:835.5px;top:497.3px;font-size:9.4px;color:#222;font-weight:400;letter-spacing:-0.05px;">k4</div>
<div class="t" style="left:1167.8px;top:497.3px;font-size:9.4px;color:#333;font-weight:400;letter-spacing:-0.05px;">Group</div>
<div class="t" style="left:835.5px;top:517.5px;font-size:9.4px;color:#222;font-weight:700;letter-spacing:-0.05px;">livi</div>
<div class="t" style="left:1001.6px;top:517.5px;font-size:9.4px;color:#222;font-weight:400;letter-spacing:-0.05px;">sfsf</div>
<div class="t" style="left:1167.8px;top:517.5px;font-size:9.4px;color:#333;font-weight:400;letter-spacing:-0.05px;">Service</div>
<div class="t" style="left:848.6px;top:537.8px;font-size:9.4px;color:#222;font-weight:400;letter-spacing:-0.05px;">testyu</div>
<div class="t" style="left:1167.8px;top:537.8px;font-size:9.4px;color:#333;font-weight:400;letter-spacing:-0.05px;">Service</div>
<div class="t" style="left:835.5px;top:558.0px;font-size:9.4px;color:#222;font-weight:400;letter-spacing:-0.05px;">Mold</div>
<div class="t" style="left:835.5px;top:578.3px;font-size:9.4px;color:#222;font-weight:400;letter-spacing:-0.05px;">service</div>
<div class="t" style="left:835.5px;top:598.5px;font-size:9.4px;color:#222;font-weight:400;letter-spacing:-0.05px;">Shipping</div>
<div class="a" style="left:1333.5px;top:340.5px;width:6.5px;height:197.5px;background:#d9d9d9;"></div>
<svg style="left:0;top:0" width="1" height="1"><path d="M1334 336 L1336.8 333 L1339.5 336" fill="none" stroke="#e6e6e6" stroke-width="0.9"/></svg><div class="a" style="left:1425px;top:189px;width:224px;height:1px;background:#e6e6e6;"></div>
<div class="t" style="left:1435.2px;top:169.1px;font-size:9.6px;color:#444;font-weight:700;letter-spacing:-0.3px;">THIS ORDER</div>
<div class="t" style="left:1511.6px;top:169.1px;font-size:9.6px;color:#444;font-weight:700;letter-spacing:-0.3px;">CUSTOMER</div>
<div class="t" style="left:1599.4px;top:169.1px;font-size:9.6px;color:#444;font-weight:700;letter-spacing:-0.3px;">LOGS</div>
<div class="a" style="left:1499.3px;top:188px;width:74.7px;height:2.2px;background:#0c62a2;"></div>
<div class="t" style="left:1438px;top:199.0px;font-size:9.8px;color:#333;font-weight:700;letter-spacing:-0.1px;">SUMMARY</div>
<div class="t" style="left:1438px;top:222.7px;font-size:9px;color:#777;font-weight:400;letter-spacing:-0.05px;">Credit Limit:</div>
<div class="t" style="right:284px;top:222.7px;font-size:9px;color:#333;font-weight:400;letter-spacing:-0.1px;text-align:right;">$70,000.00</div>
<div class="t" style="left:1438px;top:234.8px;font-size:9px;color:#777;font-weight:400;letter-spacing:-0.05px;">Available Credit:</div>
<div class="t" style="right:284px;top:234.8px;font-size:9px;color:#333;font-weight:400;letter-spacing:-0.1px;text-align:right;">$-109,959.11</div>
<div class="t" style="left:1438px;top:247.0px;font-size:9px;color:#777;font-weight:400;letter-spacing:-0.05px;">Open Invoices:</div>
<div class="t" style="right:284px;top:247.0px;font-size:9px;color:#333;font-weight:400;letter-spacing:-0.1px;text-align:right;">$93,373.71</div>
<div class="t" style="left:1438px;top:259.1px;font-size:9px;color:#777;font-weight:400;letter-spacing:-0.05px;">Credit:</div>
<div class="t" style="right:284px;top:259.1px;font-size:9px;color:#333;font-weight:400;letter-spacing:-0.1px;text-align:right;">$-166.13</div>
<div class="t" style="left:1438px;top:271.3px;font-size:9px;color:#777;font-weight:400;letter-spacing:-0.05px;">Deposits:</div>
<div class="t" style="right:284px;top:271.3px;font-size:9px;color:#333;font-weight:400;letter-spacing:-0.1px;text-align:right;">$300.43</div>
<div class="t" style="left:1438px;top:283.4px;font-size:9px;color:#777;font-weight:400;letter-spacing:-0.05px;">Open Balance:</div>
<div class="t" style="right:284px;top:283.4px;font-size:9px;color:#333;font-weight:400;letter-spacing:-0.1px;text-align:right;">$117,558.80</div>
<div class="t" style="left:1438px;top:295.6px;font-size:9px;color:#777;font-weight:400;letter-spacing:-0.05px;">Open Sale Orders:</div>
<div class="t" style="right:284px;top:295.6px;font-size:9px;color:#333;font-weight:400;letter-spacing:-0.1px;text-align:right;">74</div>
<div class="t" style="left:1438px;top:307.7px;font-size:9px;color:#777;font-weight:400;letter-spacing:-0.05px;">Phone:</div>
<div class="t" style="right:284px;top:307.7px;font-size:9px;color:#333;font-weight:400;letter-spacing:-0.1px;text-align:right;">430574389656</div>
<div class="t" style="left:1438px;top:319.9px;font-size:9px;color:#777;font-weight:400;letter-spacing:-0.05px;">Email:</div>
<div class="t" style="left:1438px;top:332.0px;font-size:9px;color:#777;font-weight:400;letter-spacing:-0.05px;">Card on file:</div>
<div class="t" style="right:284px;top:332.0px;font-size:9px;color:#333;font-weight:400;letter-spacing:-0.1px;text-align:right;">Master Card **5454</div>
<div class="a" style="left:1425px;top:349px;width:224px;height:1.5px;background:#ececec;"></div>
<div class="t" style="left:1438px;top:360.1px;font-size:9.8px;color:#333;font-weight:700;letter-spacing:-0.1px;">RECENT TRANSACTION</div>
<div class="a" style="left:1641px;top:363px;width:5px;height:36px;background:#dadada;"></div>
<div class="t" style="left:1438.5px;top:389.4px;font-size:9.6px;color:#222;font-weight:700;letter-spacing:-0.2px;">Sale Order</div>
<svg style="left:0;top:0" width="1" height="1"><path d="M1611.5 390.5 L1614.5 394.0 L1611.5 397.5" fill="none" stroke="#777" stroke-width="1.4"/></svg><div class="a" style="left:1438px;top:406.0px;width:186px;height:1px;background:#ededed;"></div>
<div class="t" style="left:1438.5px;top:414.6px;font-size:9.6px;color:#222;font-weight:700;letter-spacing:-0.2px;">Ship Order</div>
<svg style="left:0;top:0" width="1" height="1"><path d="M1611.5 415.7 L1614.5 419.2 L1611.5 422.7" fill="none" stroke="#777" stroke-width="1.4"/></svg><div class="a" style="left:1438px;top:431.2px;width:186px;height:1px;background:#ededed;"></div>
<div class="t" style="left:1438.5px;top:439.8px;font-size:9.6px;color:#222;font-weight:700;letter-spacing:-0.2px;">Invoice</div>
<svg style="left:0;top:0" width="1" height="1"><path d="M1611.5 440.9 L1614.5 444.4 L1611.5 447.9" fill="none" stroke="#777" stroke-width="1.4"/></svg><div class="a" style="left:1425px;top:454px;width:224px;height:1.5px;background:#ececec;"></div>
<div class="a" style="left:1438.3px;top:465.8px;width:47.4px;height:21px;background:#ececec;border-radius:2px"></div>
<div class="t" style="left:1262.0px;width:400px;text-align:center;top:472.1px;font-size:9.2px;color:#2a78b5;font-weight:400;letter-spacing:-0.2px;">CARD</div>
<div class="a" style="left:1489.5px;top:465.8px;width:46.3px;height:21px;background:#ececec;border-radius:2px"></div>
<div class="t" style="left:1312.65px;width:400px;text-align:center;top:472.1px;font-size:9.2px;color:#2a78b5;font-weight:400;letter-spacing:-0.2px;">CHECK</div>
<div class="a" style="left:1538.5px;top:465.8px;width:46.3px;height:21px;background:#ececec;border-radius:2px"></div>
<div class="t" style="left:1361.65px;width:400px;text-align:center;top:472.1px;font-size:9.2px;color:#2a78b5;font-weight:400;letter-spacing:-0.2px;">CASH</div>
<div class="a" style="left:1587.7px;top:465.8px;width:47.7px;height:21px;background:#ececec;border-radius:2px"></div>
<div class="t" style="left:1411.55px;width:400px;text-align:center;top:472.1px;font-size:9.2px;color:#2a78b5;font-weight:400;letter-spacing:-0.2px;">CRDT</div>
<div class="a" style="left:1425px;top:496px;width:224px;height:1.5px;background:#ececec;"></div>
<div class="t" style="left:1431.6px;top:505.6px;font-size:9.6px;color:#222;font-weight:700;letter-spacing:-0.2px;">Open Balance</div>
<div class="t" style="left:1431.6px;top:517.7px;font-size:9.6px;color:#333;font-weight:400;letter-spacing:-0.3px;">SubTotal:</div>
<div class="t" style="right:290px;top:517.8px;font-size:9.4px;color:#333;font-weight:400;letter-spacing:-0.3px;text-align:right;">$0.00</div>
<div class="t" style="left:1431.6px;top:529.8px;font-size:9.6px;color:#333;font-weight:400;letter-spacing:-0.3px;">Discount:</div>
<div class="t" style="right:290px;top:529.9px;font-size:9.4px;color:#333;font-weight:400;letter-spacing:-0.3px;text-align:right;">$0</div>
<div class="a" style="left:1641px;top:509px;width:5px;height:40px;background:#dadada;"></div>

<div class="a" style="left:1032px;top:543px;width:871px;height:497px;background:#555555;"></div>
<div class="a" style="left:1033px;top:544px;width:869px;height:27.5px;background:#646464;"></div>
<div class="t" style="left:1046.4px;top:553.8px;font-size:10.2px;color:#e2e2e2;font-weight:400;letter-spacing:0px;">Point of Sale</div>
<svg style="left:0;top:0" width="1920" height="1040">
<rect x="1787.5" y="557.2" width="9" height="1" fill="#dcdcdc"/>
<rect x="1831.8" y="553.3" width="8.5" height="8.5" fill="none" stroke="#dcdcdc" stroke-width="1"/>
<path d="M1876.5 553.2 L1885 561.7 M1885 553.2 L1876.5 561.7" stroke="#dcdcdc" stroke-width="1.1"/>
</svg>
<div class="a" style="left:1033px;top:571.5px;width:869px;height:468.5px;background:#ececec;"></div>
<div class="a" style="left:1747px;top:571.5px;width:1px;height:468.5px;background:#d9d9d9;"></div>
<div class="a" style="left:1748px;top:676px;width:154px;height:1px;background:#d9d9d9;"></div>
<div class="t" style="left:1039.8px;top:587.6px;font-size:9.1px;color:#1665a3;font-weight:400;letter-spacing:0px;">Customer:</div>
<div class="a" style="left:1088.6px;top:578.7px;width:118.4px;height:25px;background:#ffffff;border-radius:2px"></div>
<div class="t" style="left:1090.5px;top:586.9px;font-size:10.5px;color:#222;font-weight:400;letter-spacing:0px;">Karinatest</div>
<div class="a" style="left:1138px;top:584px;width:1px;height:16px;background:#111;"></div>
<svg style="left:0;top:0" width="1" height="1"><path d="M1196 590.1 H1204 L1200 594.9 Z" fill="#c4c4c4"/></svg><div class="a" style="left:1208.8px;top:578.7px;width:24.6px;height:25px;background:#ffffff;border-radius:2px"></div>
<svg style="left:0;top:0" width="1" height="1"><path d="M1217 587.3 L1225 595.3 M1225 587.3 L1217 595.3" stroke="#0c62a2" stroke-width="1.6"/></svg><div class="t" style="left:1246px;top:587.5px;font-size:9.3px;color:#333;font-weight:400;letter-spacing:0px;">Ship To:</div>
<div class="a" style="left:1286px;top:578.7px;width:153.7px;height:25px;background:#ffffff;border-radius:2px"></div>
<div class="t" style="left:1288px;top:587.5px;font-size:10.4px;color:#222;font-weight:400;letter-spacing:0px;">p,</div>
<svg style="left:0;top:0" width="1" height="1"><path d="M1429 590.1 H1437 L1433 594.9 Z" fill="#c4c4c4"/></svg><div class="t" style="left:1452.5px;top:587.6px;font-size:9.1px;color:#333;font-weight:400;letter-spacing:0px;">Order #:</div>
<div class="a" style="left:1493px;top:579.2px;width:91.5px;height:24px;background:#f7f7f7;border-radius:2px"></div>
<div class="t" style="left:1497px;top:586.8px;font-size:10.8px;color:#555;font-weight:400;letter-spacing:0px;">SO-0044506-D</div>
<div class="a" style="left:1717px;top:579.2px;width:23.5px;height:24px;background:#ffffff;border-radius:2px"></div>
<svg style="left:0;top:0" width="1" height="1"><path d="M1723.3 593.8 L1728.8 588.3 L1734.3 593.8" fill="none" stroke="#0c62a2" stroke-width="1.6"/></svg><div class="t" style="left:1088.6px;top:613.5px;font-size:9.3px;color:#555;font-weight:400;letter-spacing:0px;">Karinatest</div>
<div class="t" style="left:1286px;top:613.5px;font-size:9.3px;color:#555;font-weight:400;letter-spacing:0px;">kp;,kp;,</div>
<div class="t" style="left:1088.6px;top:626.7px;font-size:9.3px;color:#555;font-weight:400;letter-spacing:0px;">Brooklyn, NY, 5464565767,</div>
<div class="t" style="left:1286px;top:626.7px;font-size:9.3px;color:#555;font-weight:400;letter-spacing:0px;">kl, ,l;, ,lk, US,</div>
<div class="t" style="left:1088.6px;top:639.8px;font-size:9.3px;color:#555;font-weight:400;letter-spacing:0px;">USA</div>
<div class="t" style="left:1286px;top:639.8px;font-size:9.3px;color:#555;font-weight:400;letter-spacing:0px;">tel: 58487768</div>
<svg style="left:0;top:0" width="1920" height="1040">
<path d="M1219.2 661.8 l0.6 -3.6 l6.5 -6.5 l3 3 l-6.5 6.5 z M1227.3 650.7 l1.3 -1.3 l3 3 l-1.3 1.3z" fill="#0c62a2"/>
<path d="M1425 661.8 l0.6 -3.6 l6.5 -6.5 l3 3 l-6.5 6.5 z M1433.1 650.7 l1.3 -1.3 l3 3 l-1.3 1.3z" fill="#0c62a2"/>
</svg>
<div class="t" style="left:1452.5px;top:620.1px;font-size:9.1px;color:#333;font-weight:400;letter-spacing:0px;">Date:</div>
<div class="t" style="left:1475.5px;top:615.5px;font-size:11.5px;color:#e33;font-weight:400;letter-spacing:0px;">*</div>
<div class="a" style="left:1487.5px;top:612px;width:76.3px;height:23.8px;background:#ffffff;border-radius:2px"></div>
<div class="t" style="left:1493.5px;top:619.2px;font-size:11px;color:#333;font-weight:400;letter-spacing:-0.1px;">5/26/2021</div>
<div class="t" style="left:1452.5px;top:653.1px;font-size:9.1px;color:#333;font-weight:400;letter-spacing:0px;">Ship Date:</div>
<div class="a" style="left:1501.2px;top:643.8px;width:124.5px;height:25.7px;background:#ffffff;border-radius:2px"></div>
<div class="t" style="left:1505px;top:652.2px;font-size:11px;color:#333;font-weight:400;letter-spacing:-0.1px;">5/27/2021</div>
<svg style="left:0;top:0" width="1920" height="1040">
<g fill="none" stroke="#dadada" stroke-width="1.1"><rect x="1551" y="619.5" width="9.5" height="9"/><rect x="1613.3" y="652.5" width="9.5" height="9"/></g>
<rect x="1551" y="619" width="9.5" height="2" fill="#dadada"/><rect x="1613.3" y="652" width="9.5" height="2" fill="#dadada"/>
</svg>
<div class="t" style="left:1753.7px;top:587.6px;font-size:9.1px;color:#333;font-weight:400;letter-spacing:0px;">Store:</div>
<div class="a" style="left:1785.5px;top:579.2px;width:103.8px;height:24.3px;background:#ffffff;border-radius:2px"></div>
<div class="t" style="left:1787.7px;top:587.4px;font-size:10.6px;color:#333;font-weight:400;letter-spacing:-0.05px;">Spring Valley</div>
<svg style="left:0;top:0" width="1" height="1"><path d="M1878.2 590.1 H1886.2 L1882.2 594.9 Z" fill="#c4c4c4"/></svg><div class="t" style="left:1753.7px;top:620.1px;font-size:9.1px;color:#333;font-weight:400;letter-spacing:0px;">Rep:</div>
<div class="a" style="left:1785.5px;top:612px;width:103.8px;height:24px;background:#ffffff;border-radius:2px"></div>
<div class="t" style="left:1787.7px;top:619.9px;font-size:10.6px;color:#333;font-weight:400;letter-spacing:-0.05px;">test</div>
<svg style="left:0;top:0" width="1" height="1"><path d="M1878.2 622.6 H1886.2 L1882.2 627.4 Z" fill="#c4c4c4"/></svg><div class="t" style="left:1753.7px;top:653.1px;font-size:9.1px;color:#333;font-weight:400;letter-spacing:0px;">Tax:</div>
<div class="a" style="left:1785.5px;top:644.2px;width:103.8px;height:25px;background:#ffffff;border-radius:2px"></div>
<div class="t" style="left:1787.7px;top:652.9px;font-size:10.6px;color:#333;font-weight:400;letter-spacing:-0.05px;">Test Tax</div>
<svg style="left:0;top:0" width="1" height="1"><path d="M1878.2 655.6 H1886.2 L1882.2 660.4 Z" fill="#c4c4c4"/></svg><div class="t" style="left:1753.7px;top:687.0px;font-size:8.9px;color:#333;font-weight:400;letter-spacing:0px;">Balance:</div>
<div class="t" style="right:30px;top:687.0px;font-size:9px;color:#1c6fb0;font-weight:400;letter-spacing:0px;text-align:right;">$117,558.80</div>
<div class="a" style="left:1041px;top:711px;width:79px;height:327.5px;background:#ffffff;"></div>
<div class="a" style="left:1041px;top:1038.5px;width:700px;height:1.5px;background:#d9d9d9;"></div>
<div class="a" style="left:1120px;top:711px;width:621px;height:327.5px;background:#ffffff;"></div>
<div class="t" style="left:1044.5px;top:720.0px;font-size:9.2px;color:#333;font-weight:400;letter-spacing:0px;">Item</div>
<div class="t" style="left:1039.8px;top:685.6px;font-size:9.2px;color:#222;font-weight:400;letter-spacing:0px;">Find or scan item:</div>
<div class="a" style="left:1119px;top:676.6px;width:622px;height:25.6px;background:#ffffff;border:1px solid #2f7cbc;border-radius:2px 2px 0 0"></div>
<div class="t" style="left:1123.7px;top:685.7px;font-size:9px;color:#a9a9a9;font-weight:400;letter-spacing:0px;">Search or scan item</div>
<svg style="left:0;top:0" width="1" height="1"><path d="M1728.5 687.6 H1736.5 L1732.5 692.4 Z" fill="#0c62a2"/></svg><div class="a" style="left:1120.2px;top:702.2px;width:620.5px;height:318px;background:#ffffff;border:1px solid #aebfcc;border-top:none"></div>
<div class="a" style="left:1121.2px;top:730.5px;width:619px;height:1px;background:#d5e0e8;"></div>
<svg style="left:0;top:0" width="1" height="1"><path d="M1132.4 711.5 v11 M1126.9 717 h11" stroke="#0c62a2" stroke-width="1.6"/></svg><div class="t" style="left:1143.7px;top:712.6px;font-size:9.1px;color:#1665a3;font-weight:400;letter-spacing:0px;">ADD NEW</div>
<div class="a" style="left:1122.3px;top:858.3px;width:604.4px;height:19.7px;background:#e3f0fa;border:1px solid #94c7ee"></div>
<div class="t" style="left:1132.4px;top:742.2px;font-size:9.2px;color:#222;font-weight:400;letter-spacing:0px;">101</div>
<div class="t" style="left:1530.5px;top:742.2px;font-size:9.2px;color:#333;font-weight:400;letter-spacing:0px;">Group</div>
<div class="t" style="left:1132.4px;top:762.6px;font-size:9.2px;color:#222;font-weight:400;letter-spacing:0px;">Bedikah</div>
<div class="t" style="left:1331.7px;top:762.6px;font-size:9.2px;color:#222;font-weight:400;letter-spacing:0px;">Bedikah Tefilin</div>
<div class="t" style="left:1530.5px;top:762.6px;font-size:9.2px;color:#333;font-weight:400;letter-spacing:0px;">Service</div>
<div class="t" style="left:1132.4px;top:783.1px;font-size:9.2px;color:#222;font-weight:400;letter-spacing:0px;">copy cd</div>
<div class="t" style="left:1530.5px;top:783.1px;font-size:9.2px;color:#333;font-weight:400;letter-spacing:0px;">Service</div>
<div class="t" style="left:1132.4px;top:803.5px;font-size:9.2px;color:#222;font-weight:400;letter-spacing:0px;">Delivery Charge</div>
<div class="t" style="left:1530.5px;top:803.5px;font-size:9.2px;color:#333;font-weight:400;letter-spacing:0px;">Service</div>
<div class="t" style="left:1132.4px;top:824.0px;font-size:9.2px;color:#222;font-weight:400;letter-spacing:0px;">Fondan</div>
<div class="t" style="left:1530.5px;top:824.0px;font-size:9.2px;color:#333;font-weight:400;letter-spacing:0px;">Group</div>
<div class="t" style="left:1132.4px;top:844.4px;font-size:9.2px;color:#222;font-weight:400;letter-spacing:0px;">Framing</div>
<div class="t" style="left:1331.7px;top:844.4px;font-size:9.2px;color:#222;font-weight:400;letter-spacing:0px;">Framing descr</div>
<div class="t" style="left:1530.5px;top:844.4px;font-size:9.2px;color:#333;font-weight:400;letter-spacing:0px;">Group</div>
<div class="t" style="left:1132.4px;top:864.9px;font-size:9.2px;color:#222;font-weight:400;letter-spacing:0px;">gh2service</div>
<div class="t" style="left:1530.5px;top:864.9px;font-size:9.2px;color:#333;font-weight:400;letter-spacing:0px;">Service</div>
<div class="t" style="left:1132.4px;top:885.3px;font-size:9.2px;color:#222;font-weight:400;letter-spacing:0px;">k3</div>
<div class="t" style="left:1530.5px;top:885.3px;font-size:9.2px;color:#333;font-weight:400;letter-spacing:0px;">Service</div>
<div class="t" style="left:1132.4px;top:905.8px;font-size:9.2px;color:#222;font-weight:400;letter-spacing:0px;">k4</div>
<div class="t" style="left:1530.5px;top:905.8px;font-size:9.2px;color:#333;font-weight:400;letter-spacing:0px;">Group</div>
<div class="t" style="left:1132.4px;top:926.2px;font-size:9.2px;color:#222;font-weight:700;letter-spacing:0px;">livi</div>
<div class="t" style="left:1331.7px;top:926.2px;font-size:9.2px;color:#222;font-weight:400;letter-spacing:0px;">sfsf</div>
<div class="t" style="left:1530.5px;top:926.2px;font-size:9.2px;color:#333;font-weight:400;letter-spacing:0px;">Service</div>
<div class="t" style="left:1144.8px;top:946.7px;font-size:9.2px;color:#222;font-weight:400;letter-spacing:0px;">testyu</div>
<div class="t" style="left:1530.5px;top:946.7px;font-size:9.2px;color:#333;font-weight:400;letter-spacing:0px;">Service</div>
<div class="t" style="left:1132.4px;top:967.1px;font-size:9.2px;color:#222;font-weight:400;letter-spacing:0px;">Mold</div>
<div class="t" style="left:1530.5px;top:967.1px;font-size:9.2px;color:#333;font-weight:400;letter-spacing:0px;">Service</div>
<div class="t" style="left:1132.4px;top:987.6px;font-size:9.2px;color:#222;font-weight:400;letter-spacing:0px;">service</div>
<div class="t" style="left:1530.5px;top:987.6px;font-size:9.2px;color:#333;font-weight:400;letter-spacing:0px;">Service</div>
<div class="t" style="left:1132.4px;top:1008.0px;font-size:9.2px;color:#222;font-weight:400;letter-spacing:0px;">Shipping</div>
<div class="t" style="left:1530.5px;top:1008.0px;font-size:9.2px;color:#333;font-weight:400;letter-spacing:0px;">Service</div>
<div class="a" style="left:1730.4px;top:748px;width:5.8px;height:197.4px;background:#dcdcdc;"></div>
<svg style="left:0;top:0" width="1" height="1"><path d="M1730.5 743.5 L1733.3 740.5 L1736 743.5 M1730.5 1011 L1733.3 1013.8 L1736 1011" fill="none" stroke="#e6e6e6" stroke-width="0.9"/><rect x="1739" y="1011" width="1.2" height="1.2" fill="#b5c3cd"/><rect x="1736" y="1014.2" width="1.2" height="1.2" fill="#b5c3cd"/><rect x="1739" y="1014.2" width="1.2" height="1.2" fill="#b5c3cd"/><rect x="1733" y="1017.4" width="1.2" height="1.2" fill="#b5c3cd"/><rect x="1736" y="1017.4" width="1.2" height="1.2" fill="#b5c3cd"/><rect x="1739" y="1017.4" width="1.2" height="1.2" fill="#b5c3cd"/></svg><div class="a" style="left:1754px;top:877px;width:142px;height:26px;background:#005a9e;"></div>
<div class="t" style="left:1625px;width:400px;text-align:center;top:885.2px;font-size:10px;color:#fff;font-weight:400;letter-spacing:0px;">CREDIT CARD</div>
<div class="a" style="left:1754px;top:909.6px;width:142px;height:26px;background:#005a9e;"></div>
<div class="t" style="left:1625px;width:400px;text-align:center;top:917.8px;font-size:10px;color:#fff;font-weight:400;letter-spacing:0px;">CHECK</div>
<div class="a" style="left:1754px;top:942px;width:142px;height:26px;background:#005a9e;"></div>
<div class="t" style="left:1625px;width:400px;text-align:center;top:950.2px;font-size:10px;color:#fff;font-weight:400;letter-spacing:0px;">CASH</div>
<div class="a" style="left:1754px;top:975px;width:142px;height:26px;background:#005a9e;"></div>
<div class="t" style="left:1625px;width:400px;text-align:center;top:983.2px;font-size:10px;color:#fff;font-weight:400;letter-spacing:0px;">CREDIT</div>
<div class="a" style="left:1754px;top:1007.7px;width:142px;height:26px;background:#cdcdcd;"></div>
<div class="t" style="left:1625px;width:400px;text-align:center;top:1015.9px;font-size:10px;color:#f2f2f2;font-weight:400;letter-spacing:0px;">GIFT CARD</div>

</body></html>
